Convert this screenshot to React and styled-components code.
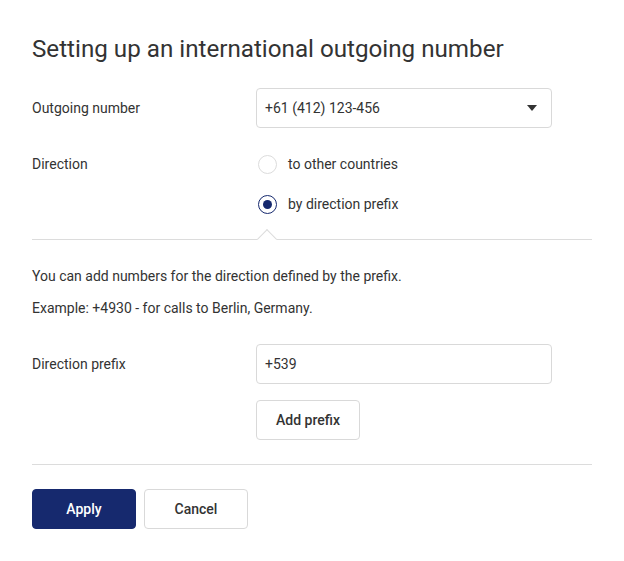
import styled, { createGlobalStyle } from "styled-components";

const GlobalStyle = createGlobalStyle`
    html, body {
        margin: 0;
        padding: 0;
        background: #ffffff;
    }
    body {
        font-family: Roboto, "Liberation Sans", sans-serif;
        color: #333333;
    }
`;

const Page = styled.div`
    width: 624px;
    padding: 33px 32px 0;
    box-sizing: border-box;
`;

const Title = styled.h1`
    margin: 0 0 23px;
    font-size: 24.2px;
    line-height: 32px;
    font-weight: 400;
    color: #333333;
`;

const Row = styled.div`
    display: grid;
    grid-template-columns: 224px 296px;
    align-items: ${(p) => (p.$top ? "start" : "center")};
    margin-bottom: ${(p) => p.$gap || 0}px;
`;

const Label = styled.div`
    font-size: 14px;
    line-height: 40px;
`;

const Field = styled.div`
    height: 40px;
    box-sizing: border-box;
    border: 1px solid #d9d9d9;
    border-radius: 4px;
    display: flex;
    align-items: center;
    justify-content: space-between;
    padding: 0 14px 0 8px;
    font-size: 14px;
`;

const Caret = styled.span`
    width: 0;
    height: 0;
    border-left: 5px solid transparent;
    border-right: 5px solid transparent;
    border-top: 6px solid #333333;
`;

const RadioList = styled.div`
    display: flex;
    flex-direction: column;
`;

const RadioRow = styled.label`
    display: flex;
    align-items: center;
    gap: 11px;
    height: 40px;
    font-size: 14px;
`;

const RadioCircle = styled.span`
    width: 19px;
    height: 19px;
    box-sizing: border-box;
    border-radius: 50%;
    margin-left: 2px;
    border: ${(p) => (p.$checked ? "1.5px solid #16296e" : "1px solid #dcdcdc")};
    display: flex;
    align-items: center;
    justify-content: center;

    &::after {
        content: "";
        display: ${(p) => (p.$checked ? "block" : "none")};
        width: 9px;
        height: 9px;
        border-radius: 50%;
        background: #16296e;
    }
`;

const Divider = styled.div`
    position: relative;
    height: 1px;
    background: #dcdcdc;
    margin: ${(p) => p.$margin};

    &::before {
        content: "";
        display: ${(p) => (p.$notch ? "block" : "none")};
        position: absolute;
        left: 228px;
        top: -7px;
        width: 13px;
        height: 13px;
        background: #ffffff;
        border-top: 1px solid #dcdcdc;
        border-left: 1px solid #dcdcdc;
        transform: rotate(45deg);
    }
`;

const Note = styled.p`
    margin: 0 0 12px;
    font-size: 14px;
    line-height: 20px;
`;

const Button = styled.button`
    height: 40px;
    width: ${(p) => p.$width || 104}px;
    box-sizing: border-box;
    border-radius: 4px;
    font-family: Roboto, "Liberation Sans", sans-serif;
    font-size: 14px;
    font-weight: 500;
    cursor: pointer;
    background: ${(p) => (p.$primary ? "#16296e" : "#ffffff")};
    color: ${(p) => (p.$primary ? "#ffffff" : "#333333")};
    border: 1px solid ${(p) => (p.$primary ? "#16296e" : "#d9d9d9")};
`;

const Actions = styled.div`
    display: flex;
    gap: 8px;
`;

export default function App() {
    return (
        <Page>
            <GlobalStyle />
            <Title>Setting up an international outgoing number</Title>
            <Row $gap={16}>
                <Label>Outgoing number</Label>
                <Field>
                    +61 (412) 123-456
                    <Caret />
                </Field>
            </Row>
            <Row $top>
                <Label>Direction</Label>
                <RadioList>
                    <RadioRow>
                        <RadioCircle />
                        to other countries
                    </RadioRow>
                    <RadioRow>
                        <RadioCircle $checked />
                        by direction prefix
                    </RadioRow>
                </RadioList>
            </Row>
            <Divider $notch $margin="15px 0 26px" />
            <Note>You can add numbers for the direction defined by the prefix.</Note>
            <Note>Example: +4930 - for calls to Berlin, Germany.</Note>
            <Row $gap={16} style={{ marginTop: 26 }}>
                <Label>Direction prefix</Label>
                <Field>+539</Field>
            </Row>
            <Row>
                <span />
                <Button>Add prefix</Button>
            </Row>
            <Divider $margin="24px 0 24px" />
            <Actions>
                <Button $primary>Apply</Button>
                <Button>Cancel</Button>
            </Actions>
        </Page>
    );
}
